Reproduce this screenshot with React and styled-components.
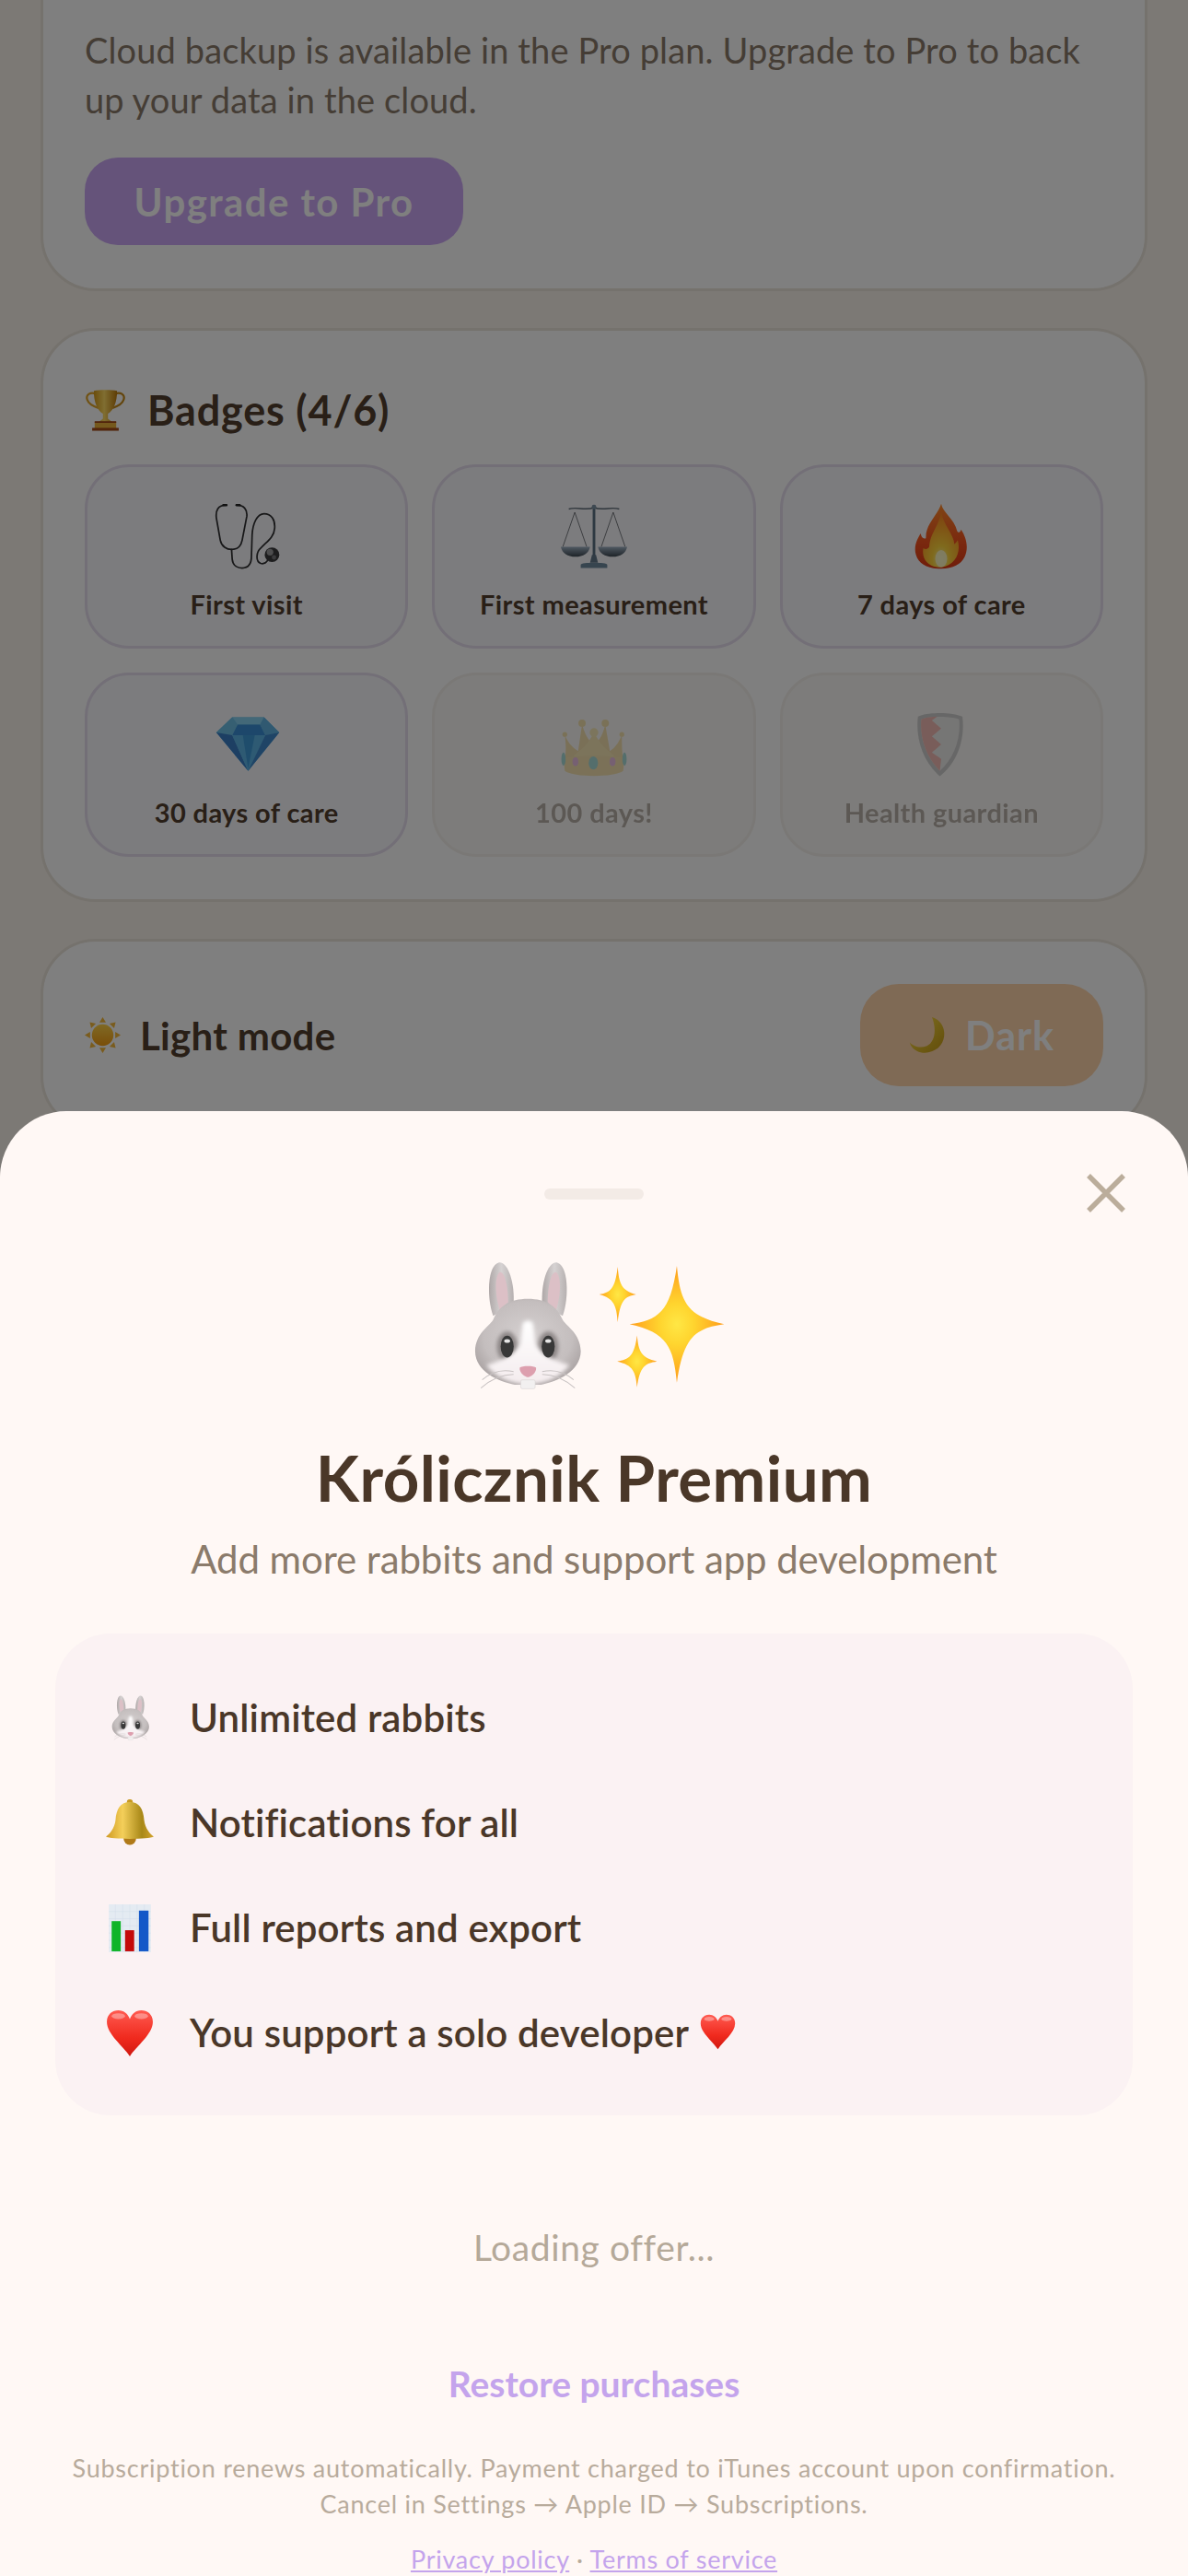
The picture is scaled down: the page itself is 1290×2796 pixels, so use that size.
import React from "react";
import styled, { createGlobalStyle } from "styled-components";

const Global = createGlobalStyle`
  html, body { margin: 0; padding: 0; background: #f9f2ea; }
  * { box-sizing: border-box; }
  body { font-family: Lato, "Noto Sans", sans-serif; }
`;

const Screen = styled.div`
  position: relative;
  width: 1290px;
  height: 2796px;
  overflow: hidden;
  background: #f9f2ea;
`;
const Page = styled.div`
  display: flex;
  flex-direction: column;
  gap: 40px;
  padding: 0 44px;
  margin-top: -60px;
`;
const Card = styled.section`
  background: #fff;
  border: 3px solid #eae4db;
  border-radius: 60px;
  padding: ${(p) => p.$pad || "46px 45px"};
`;
const Body = styled.p`
  margin: 0 0 36px;
  font-size: 38px;
  line-height: 54px;
  letter-spacing: 0.12px;
  white-space: nowrap;
  color: #8b7b6b;
`;
const UpgradeButton = styled.div`
  display: flex;
  align-items: center;
  justify-content: center;
  width: 411px;
  height: 95px;
  border-radius: 36px;
  background: #caa6f4;
  color: #fff;
  font-size: 42px;
  font-weight: 700;
  letter-spacing: 1.4px;
`;
const CardHeader = styled.div`
  display: flex;
  align-items: center;
  gap: 23px;
  height: 82px;
  margin-bottom: 18px;
`;
const CardTitle = styled.h2`
  margin: 0;
  font-size: 45px;
  font-weight: 700;
  letter-spacing: 0.8px;
  color: #523e2e;
`;
const BadgeGrid = styled.div`
  display: grid;
  grid-template-columns: repeat(3, 1fr);
  grid-auto-rows: 200px;
  gap: 26px;
`;
const Badge = styled.div`
  display: flex;
  flex-direction: column;
  align-items: center;
  padding-top: 39px;
  border-radius: 48px;
  border: 3px solid ${(p) => (p.$locked ? "#f4f1ec" : "#e6deef")};
  background: ${(p) => (p.$locked ? "#faf9f6" : "#f8f8fc")};
`;
const BadgeFade = styled.div`
  display: flex;
  flex-direction: column;
  align-items: center;
  opacity: ${(p) => (p.$locked ? 0.38 : 1)};
`;
const BadgeLabel = styled.div`
  margin-top: 20px;
  font-size: 29px;
  line-height: 36px;
  font-weight: 700;
  letter-spacing: 0.4px;
  white-space: nowrap;
  color: #523e2e;
`;
const ThemeRow = styled.div`
  display: flex;
  align-items: center;
  justify-content: space-between;
`;
const ThemeLabel = styled.div`
  display: flex;
  align-items: center;
  gap: 21px;
  font-size: 42px;
  font-weight: 700;
  letter-spacing: 0.3px;
  color: #523e2e;
`;
const DarkButton = styled.div`
  display: flex;
  align-items: center;
  justify-content: center;
  gap: 22px;
  width: 264px;
  height: 111px;
  border-radius: 42px;
  background: #fed4aa;
  color: #fff;
  font-size: 43px;
  font-weight: 700;
  letter-spacing: 1px;
`;
const Overlay = styled.div`
  position: absolute;
  inset: 0;
  background: rgba(0, 0, 0, 0.5);
`;
const Sheet = styled.div`
  position: absolute;
  left: 0;
  right: 0;
  top: 1206px;
  bottom: 0;
  padding: 84px 60px 0;
  background: #fff8f5;
  border-radius: 72px 72px 0 0;
  display: flex;
  flex-direction: column;
  align-items: center;
`;
const Handle = styled.div`
  flex: none;
  width: 108px;
  height: 12px;
  border-radius: 6px;
  background: #f3ebe6;
`;
const CloseIcon = styled.svg`
  position: absolute;
  top: 68px;
  right: 68px;
  width: 42px;
  height: 42px;
`;
const Hero = styled.div`
  flex: none;
  display: flex;
  margin-top: 64px;
`;
const Title = styled.h1`
  margin: 46px 0 0;
  font-size: 69px;
  line-height: 88px;
  font-weight: 700;
  letter-spacing: 0.4px;
  white-space: nowrap;
  color: #4a3728;
`;
const Subtitle = styled.p`
  margin: 17px 0 0;
  font-size: 42px;
  line-height: 54px;
  letter-spacing: -0.1px;
  white-space: nowrap;
  color: #8b7b6b;
`;
const Panel = styled.div`
  flex: none;
  width: 1170px;
  height: 523px;
  margin-top: 54px;
  padding: 59px 55px 56px;
  border-radius: 60px;
  background: #fbf2f3;
  display: flex;
  flex-direction: column;
  gap: 48px;
`;
const Feature = styled.div`
  display: flex;
  align-items: center;
  gap: 39px;
  height: 66px;
  font-size: 42px;
  font-weight: 600;
  letter-spacing: 0.15px;
  color: #4a3728;
`;
const FeatureText = styled.span`
  display: inline-flex;
  align-items: center;
  gap: 12px;
  padding-bottom: 3px;
  white-space: nowrap;
`;
const Loading = styled.div`
  margin-top: 116px;
  font-size: 39px;
  line-height: 54px;
  letter-spacing: 0.6px;
  color: #b5a999;
`;
const Restore = styled.div`
  margin-top: 94px;
  font-size: 39px;
  line-height: 54px;
  font-weight: 700;
  letter-spacing: 0;
  color: #c4a4ec;
`;
const Disclaimer = styled.p`
  margin: 45px 0 0;
  width: 1200px;
  font-size: 27px;
  line-height: 39px;
  letter-spacing: 0.75px;
  text-align: center;
  color: #b8ab9c;
`;
const Legal = styled.div`
  margin-top: 21px;
  font-size: 27px;
  line-height: 39px;
  letter-spacing: 0.75px;
  color: #b8ab9c;
`;
const LegalLink = styled.a`
  color: #c4a4ec;
  text-decoration: underline;
`;
const Glyph = styled.svg`
  flex: none;
  display: block;
  width: ${(p) => p.$size}px;
  height: ${(p) => p.$size}px;
`;

const star = (cx, cy, rx, ry) => {
  const seg = (sx, sy) =>
    `C${cx + sx * rx * 0.07} ${cy + sy * ry * 0.4} ${cx + sx * rx * 0.2} ${cy + sy * ry * 0.14} ${cx + sx * rx} ${cy}`;
  const seg2 = (sx, sy) =>
    `C${cx + sx * rx * 0.4} ${cy + sy * ry * 0.07} ${cx + sx * rx * 0.14} ${cy + sy * ry * 0.2} ${cx} ${cy + sy * ry}`;
  return `M${cx} ${cy - ry}${seg(1, -1)}${seg2(1, 1)}${seg(-1, 1)}${seg2(-1, -1)}Z`;
};

const Rabbit = ({ size }) => (
  <Glyph $size={size} viewBox="0 0 100 100">
    <defs>
      <radialGradient id="rb-head" cx="50%" cy="45%" r="58%">
        <stop offset="0" stopColor="#d6d1d1" />
        <stop offset="0.72" stopColor="#c4bebe" />
        <stop offset="1" stopColor="#aaa3a3" />
      </radialGradient>
      <linearGradient id="rb-ear" x1="0" x2="1" y1="0" y2="0">
        <stop offset="0" stopColor="#aea7a7" />
        <stop offset="0.5" stopColor="#d6d2d2" />
        <stop offset="1" stopColor="#b6b0b0" />
      </linearGradient>
      <linearGradient id="rb-muzzle" x1="0" x2="0" y1="0" y2="1">
        <stop offset="0" stopColor="#ffffff" />
        <stop offset="1" stopColor="#f4ecee" />
      </linearGradient>
      <filter id="rb-soft" x="-30%" y="-30%" width="160%" height="160%">
        <feGaussianBlur stdDeviation="1.6" />
      </filter>
    </defs>
    <path d="M26 42C21 28 22 5 30 3C37 2 42 18 41 34Z" fill="url(#rb-ear)" />
    <path d="M77 42C82 28 81 5 73 3C66 2 61 18 62 34Z" fill="url(#rb-ear)" />
    <path d="M31 38C27 27 27 12 31 10C35 10 37 22 37 32Z" fill="#dcc0c6" />
    <path d="M72 38C76 27 76 12 72 10C68 10 66 22 66 32Z" fill="#dcc0c6" />
    <path d="M51.5 29.5C38 29.5 30 35 26 45C23 50 13 55 12.8 68C13 83 30 90 42 92.5L61 92.5C73 90 90 83 90.3 68C90 55 80 50 77 45C73 35 65 29.5 51.5 29.5Z" fill="url(#rb-head)" />
    <ellipse cx="36.3" cy="64.6" rx="7.5" ry="11" fill="#8c8686" filter="url(#rb-soft)" />
    <ellipse cx="66.4" cy="64.6" rx="7.5" ry="11" fill="#8c8686" filter="url(#rb-soft)" />
    <path d="M47.5 49C47.5 44.5 55.5 44.5 55.5 49L57 63C61 70 70 75 82 78C74 88 63 92 51.5 92C40 92 29 88 21 78C33 75 42 70 46 63Z" fill="url(#rb-muzzle)" filter="url(#rb-soft)" />
    <ellipse cx="36.3" cy="64.6" rx="4.8" ry="8" fill="#383838" />
    <ellipse cx="66.4" cy="64.6" rx="4.8" ry="8" fill="#383838" />
    <ellipse cx="36.3" cy="60.5" rx="2.2" ry="1.4" fill="#e6e6e6" />
    <ellipse cx="66.4" cy="60.5" rx="2.2" ry="1.4" fill="#e6e6e6" />
    <path d="M45.5 80C47 78.5 56 78.5 57.5 80C58 84 53 87 51.5 87C50 87 45 84 45.5 80Z" fill="#dd9fae" />
    <rect x="46.3" y="89" width="10.5" height="6.5" rx="1" fill="#f2f0f0" stroke="#d8d3d3" strokeWidth="0.4" />
    <g fill="none" stroke="#c8c2c2" strokeWidth="0.7">
      <path d="M41 83C32 81 25 83 18 89" />
      <path d="M41 85C32 85 24 89 17 95" />
      <path d="M62 83C71 81 78 83 85 89" />
      <path d="M62 85C71 85 79 89 86 95" />
    </g>
  </Glyph>
);

const Sparkles = ({ size }) => (
  <Glyph $size={size} viewBox="0 0 100 100">
    <defs>
      <radialGradient id="sp-fill" cx="50%" cy="50%" r="50%">
        <stop offset="0" stopColor="#ffe745" />
        <stop offset="0.35" stopColor="#ffd52f" />
        <stop offset="1" stopColor="#ff9d1c" />
      </radialGradient>
    </defs>
    <path d={star(60.8, 48.2, 34.7, 42.8)} fill="url(#sp-fill)" />
    <path d={star(17.4, 26.4, 13.5, 20.3)} fill="url(#sp-fill)" />
    <path d={star(31.6, 75.5, 14.6, 19)} fill="url(#sp-fill)" />
  </Glyph>
);

const Trophy = ({ size }) => (
  <Glyph $size={size} viewBox="0 0 100 100">
    <defs>
      <linearGradient id="tr-gold" x1="0" x2="1" y1="0" y2="0">
        <stop offset="0" stopColor="#d69a18" />
        <stop offset="0.45" stopColor="#ffdc63" />
        <stop offset="1" stopColor="#bd7a0c" />
      </linearGradient>
    </defs>
    <path d="M27 10C14 4 2 12 6 24C9 34 20 40 33 44" fill="none" stroke="#e0a428" strokeWidth="5" />
    <path d="M73 10C86 4 98 12 94 24C91 34 80 40 67 44" fill="none" stroke="#c78a18" strokeWidth="5" />
    <path d="M22 3C35 0 65 0 78 3C78 30 70 50 56 58L56 70L66 78L34 78L44 70L44 58C30 50 22 30 22 3Z" fill="url(#tr-gold)" />
    <rect x="24" y="78" width="52" height="16" fill="#eab23a" />
    <rect x="18" y="92" width="64" height="7" fill="#a44a18" />
    <rect x="24" y="76" width="52" height="4" fill="#a44a18" />
  </Glyph>
);

const Stethoscope = ({ size }) => (
  <Glyph $size={size} viewBox="0 0 100 100">
    <g fill="none" stroke="#2e2e30" strokeWidth="2.4" strokeLinecap="round">
      <path d="M19 3C6 3 3 12 4 22L10 56C12 66 20 70 27 70C35 70 41 66 43 56L50 20C51 10 46 3 34 3" />
      <path d="M27 70L28 85C29 95 37 98 43 98C52 98 57 92 57 80L58 48C59 30 66 16 76 16C87 16 93 25 92 38C91 52 80 58 71 68C64 74 63 88 71 91C75 92 79 90 81 87" />
    </g>
    <rect x="13" y="1.5" width="8" height="3.4" rx="1.5" fill="#222" />
    <rect x="33" y="1.5" width="8" height="3.4" rx="1.5" fill="#222" />
    <circle cx="88" cy="78" r="11" fill="#3a3a3c" />
    <circle cx="85" cy="74" r="5" fill="#9a9a9c" />
    <circle cx="91" cy="82" r="3.4" fill="#77777a" />
  </Glyph>
);

const Scales = ({ size }) => (
  <Glyph $size={size} viewBox="0 0 100 100">
    <defs>
      <linearGradient id="sc-pan" x1="0" x2="0" y1="0" y2="1">
        <stop offset="0" stopColor="#9fb2c4" />
        <stop offset="1" stopColor="#3c4650" />
      </linearGradient>
    </defs>
    <path d="M12 9C24 5 36 12 50 7C64 12 76 5 88 9" fill="none" stroke="#5f6c78" strokeWidth="2" />
    <g fill="none" stroke="#33383e" strokeWidth="0.9">
      <path d="M21 14L3 66M21 14L39 66" />
      <path d="M79 14L61 66M79 14L97 66" />
    </g>
    <path d="M0 66H44C42 76 34 81 22 81C10 81 2 76 0 66Z" fill="url(#sc-pan)" />
    <path d="M56 66H100C98 76 90 81 78 81C66 81 58 76 56 66Z" fill="url(#sc-pan)" />
    <rect x="48" y="4" width="4" height="80" fill="#5b7184" />
    <circle cx="50" cy="6" r="3.4" fill="#7d92a4" />
    <path d="M47 78H53L56 90H44Z" fill="#63798b" />
    <path d="M30 93C30 89 70 89 70 93V98H30Z" fill="#6e8a9e" />
  </Glyph>
);

const Fire = ({ size }) => (
  <Glyph $size={size} viewBox="0 0 100 100">
    <defs>
      <linearGradient id="fi-out" x1="0" x2="0" y1="0" y2="1">
        <stop offset="0" stopColor="#ff8a2a" />
        <stop offset="0.6" stopColor="#f4511e" />
        <stop offset="1" stopColor="#e03a14" />
      </linearGradient>
      <radialGradient id="fi-in" cx="50%" cy="85%" r="80%">
        <stop offset="0" stopColor="#fff6a0" />
        <stop offset="0.3" stopColor="#ffd43a" />
        <stop offset="0.75" stopColor="#ffa428" />
        <stop offset="1" stopColor="#fb8a22" />
      </radialGradient>
    </defs>
    <path d="M50 1C52 14 70 24 74 42C76 46 79 44 80 40C88 52 92 68 85 82C80 92 68 99 50 99C30 99 16 92 12 78C8 66 14 54 19 46C20 52 23 55 27 53C26 32 44 20 50 1Z" fill="url(#fi-out)" />
    <path d="M50 14C54 34 68 46 70 62C72 60 74 58 75 56C80 74 72 94 50 97C30 97 20 84 23 68C26 70 30 70 32 66C33 46 46 36 50 14Z" fill="url(#fi-in)" />
    <ellipse cx="50" cy="84" rx="9" ry="13" fill="#fffbd0" opacity="0.85" />
  </Glyph>
);

const Gem = ({ size }) => (
  <Glyph $size={size} viewBox="0 0 100 100">
    <polygon points="28,9 76,9 99,32 52,90 4,32" fill="#6cc0ea" />
    <polygon points="28,9 76,9 70,20 36,20" fill="#86d0f0" />
    <polygon points="36,20 70,20 78,36 28,36" fill="#3a8fd6" />
    <polygon points="28,9 36,20 28,36 4,32" fill="#6cbee4" />
    <polygon points="76,9 70,20 78,36 99,32" fill="#60b2e2" />
    <polygon points="4,32 28,36 52,90" fill="#3a7ec6" />
    <polygon points="28,36 78,36 52,90" fill="#5cb4e6" />
    <polygon points="44,36 62,36 52,86" fill="#3f9ad8" />
    <polygon points="78,36 99,32 52,90" fill="#3f88cc" />
  </Glyph>
);

const Crown = ({ size }) => (
  <Glyph $size={size} viewBox="0 0 100 100">
    <path d="M6 36C8 50 8 62 6 72L94 72C92 62 92 50 92 36C86 50 80 56 74 60L67 20C62 40 56 46 50 50C44 46 38 40 32 20L26 60C20 56 12 50 6 36Z" fill="#eeb93a" />
    <path d="M50 32C42 48 32 58 20 66L22 80H78L80 66C68 58 58 48 50 32Z" fill="#f7cf50" />
    <path d="M4 72C12 66 88 66 96 72L94 90C82 100 18 100 6 90Z" fill="#f0c244" />
    <circle cx="6" cy="35" r="3.6" fill="#efbf3e" />
    <circle cx="92" cy="35" r="3.6" fill="#efbf3e" />
    <circle cx="32" cy="18" r="5.5" fill="#efbf3e" />
    <circle cx="67" cy="18" r="5.5" fill="#efbf3e" />
    <circle cx="50" cy="32" r="6.5" fill="#f7d65a" />
    <ellipse cx="49" cy="78" rx="7" ry="10" fill="#27b0a8" />
    <ellipse cx="22" cy="76" rx="4.5" ry="6.5" fill="#d868c8" />
    <ellipse cx="78" cy="76" rx="4.5" ry="6.5" fill="#d868c8" />
    <ellipse cx="4" cy="72" rx="3.2" ry="10" fill="#27b0a8" />
    <ellipse cx="96" cy="72" rx="3.2" ry="10" fill="#27b0a8" />
  </Glyph>
);

const Shield = ({ size }) => (
  <Glyph $size={size} viewBox="0 0 100 100">
    <path d="M15 8C30 1 66 1 82 8C86 40 76 76 48 98C22 76 11 40 15 8Z" fill="#8a8a8e" />
    <path d="M20 12C34 7 64 7 77 12C80 40 70 70 48 90C28 70 17 40 20 12Z" fill="#d8d8da" />
    <path d="M20 12C28 9 36 8 44 8L36 14L50 26L36 38L50 50L36 62L50 72L48 90C28 70 17 40 20 12Z" fill="#e8584a" />
  </Glyph>
);

const Sun = ({ size }) => (
  <Glyph $size={size} viewBox="0 0 100 100">
    <defs>
      <linearGradient id="su-core" x1="0" x2="0" y1="0" y2="1">
        <stop offset="0" stopColor="#ffd34a" />
        <stop offset="1" stopColor="#f39c12" />
      </linearGradient>
    </defs>
    <g fill="#f5b83a">
      <polygon points="50,0 41,15 59,15" />
      <polygon points="50,100 41,85 59,85" />
      <polygon points="0,50 15,41 15,59" />
      <polygon points="100,50 85,41 85,59" />
      <polygon points="14,14 31,18 18,31" />
      <polygon points="86,14 69,18 82,31" />
      <polygon points="14,86 31,82 18,69" />
      <polygon points="86,86 69,82 82,69" />
    </g>
    <circle cx="50" cy="50" r="30" fill="url(#su-core)" />
  </Glyph>
);

const Moon = ({ size }) => (
  <Glyph $size={size} viewBox="0 0 100 100">
    <defs>
      <linearGradient id="mo-fill" x1="0" x2="1" y1="0" y2="1">
        <stop offset="0" stopColor="#ffe14a" />
        <stop offset="1" stopColor="#c59a12" />
      </linearGradient>
    </defs>
    <path d="M64 0C90 8 104 34 96 62C88 92 50 108 22 94C12 89 5 82 2 70C12 82 32 88 50 80C72 70 78 34 64 0Z" fill="url(#mo-fill)" />
  </Glyph>
);

const Bell = ({ size }) => (
  <Glyph $size={size} viewBox="0 0 100 100">
    <defs>
      <linearGradient id="be-gold" x1="0" x2="1" y1="0" y2="0">
        <stop offset="0" stopColor="#cf9a22" />
        <stop offset="0.35" stopColor="#f4cf5a" />
        <stop offset="0.75" stopColor="#a88818" />
        <stop offset="1" stopColor="#d4a42c" />
      </linearGradient>
    </defs>
    <ellipse cx="50" cy="82" rx="13" ry="13" fill="#b07a18" />
    <rect x="44" y="0" width="12" height="10" rx="5" fill="#c89a22" />
    <path d="M50 6C30 6 22 20 20 44C18 60 8 72 0 78C10 84 90 84 100 78C92 72 82 60 80 44C78 20 70 6 50 6Z" fill="url(#be-gold)" />
  </Glyph>
);

const Chart = ({ size }) => (
  <Glyph $size={size} viewBox="0 0 100 100">
    <rect x="6" y="0" width="88" height="100" fill="#e4ebf2" />
    <g stroke="#cfdbe8" strokeWidth="0.8">
      <path d="M6 15H94M6 30H94M6 45H94M6 60H94M6 75H94M6 90H94" />
      <path d="M20 0V100M35 0V100M50 0V100M65 0V100M80 0V100" />
    </g>
    <rect x="12" y="35" width="19" height="63" fill="#0fb428" />
    <rect x="40" y="54" width="19" height="44" fill="#c40a0a" />
    <rect x="69" y="13" width="20" height="85" fill="#1458c8" />
  </Glyph>
);

const Heart = ({ size, id = "he-fill" }) => (
  <Glyph $size={size} viewBox="0 0 100 100">
    <defs>
      <linearGradient id={id} x1="0" x2="0" y1="0" y2="1">
        <stop offset="0" stopColor="#ff5a50" />
        <stop offset="0.6" stopColor="#f02a1e" />
        <stop offset="1" stopColor="#d01810" />
      </linearGradient>
    </defs>
    <path d="M50 98C36 76 2 52 2 26C2 10 14 2 26 2C38 2 46 10 50 20C54 10 62 2 74 2C86 2 98 10 98 26C98 52 64 76 50 98Z" fill={`url(#${id})`} />
    <ellipse cx="26" cy="14" rx="14" ry="6" fill="#ffffff" opacity="0.35" />
    <ellipse cx="74" cy="14" rx="14" ry="6" fill="#ffffff" opacity="0.35" />
  </Glyph>
);

const badges = [
  { label: "First visit", Icon: Stethoscope },
  { label: "First measurement", Icon: Scales },
  { label: "7 days of care", Icon: Fire },
  { label: "30 days of care", Icon: Gem },
  { label: "100 days!", Icon: Crown, locked: true },
  { label: "Health guardian", Icon: Shield, locked: true },
];

export default function App() {
  return (
    <Screen>
      <Global />
      <Page>
        <Card $pad="84px 45px 47px">
          <Body>
            Cloud backup is available in the Pro plan. Upgrade to Pro to back
            <br />
            up your data in the cloud.
          </Body>
          <UpgradeButton>Upgrade to Pro</UpgradeButton>
        </Card>
        <Card $pad="45px 45px 46px">
          <CardHeader>
            <Trophy size={45} />
            <CardTitle>Badges (4/6)</CardTitle>
          </CardHeader>
          <BadgeGrid>
            {badges.map(({ label, Icon, locked }) => (
              <Badge key={label} $locked={locked}>
                <BadgeFade $locked={locked}>
                  <Icon size={72} />
                  <BadgeLabel>{label}</BadgeLabel>
                </BadgeFade>
              </Badge>
            ))}
          </BadgeGrid>
        </Card>
        <Card>
          <ThemeRow>
            <ThemeLabel>
              <Sun size={39} />
              Light mode
            </ThemeLabel>
            <DarkButton>
              <Moon size={39} />
              Dark
            </DarkButton>
          </ThemeRow>
        </Card>
      </Page>
      <Overlay />
      <Sheet>
        <Handle />
        <CloseIcon viewBox="0 0 42 42">
          <path d="M2 2L40 40M40 2L2 40" stroke="#bbad9b" strokeWidth="5.5" fill="none" />
        </CloseIcon>
        <Hero>
          <Rabbit size={148} />
          <Sparkles size={148} />
        </Hero>
        <Title>Królicznik Premium</Title>
        <Subtitle>Add more rabbits and support app development</Subtitle>
        <Panel>
          <Feature>
            <Rabbit size={52} />
            <FeatureText>Unlimited rabbits</FeatureText>
          </Feature>
          <Feature>
            <Bell size={52} />
            <FeatureText>Notifications for all</FeatureText>
          </Feature>
          <Feature>
            <Chart size={52} />
            <FeatureText>Full reports and export</FeatureText>
          </Feature>
          <Feature>
            <Heart size={52} />
            <FeatureText>
              You support a solo developer
              <Heart size={39} id="he-fill-small" />
            </FeatureText>
          </Feature>
        </Panel>
        <Loading>Loading offer...</Loading>
        <Restore>Restore purchases</Restore>
        <Disclaimer>
          Subscription renews automatically. Payment charged to iTunes account upon confirmation.
          <br />
          Cancel in Settings → Apple ID → Subscriptions.
        </Disclaimer>
        <Legal>
          <LegalLink>Privacy policy</LegalLink> · <LegalLink>Terms of service</LegalLink>
        </Legal>
      </Sheet>
    </Screen>
  );
}
